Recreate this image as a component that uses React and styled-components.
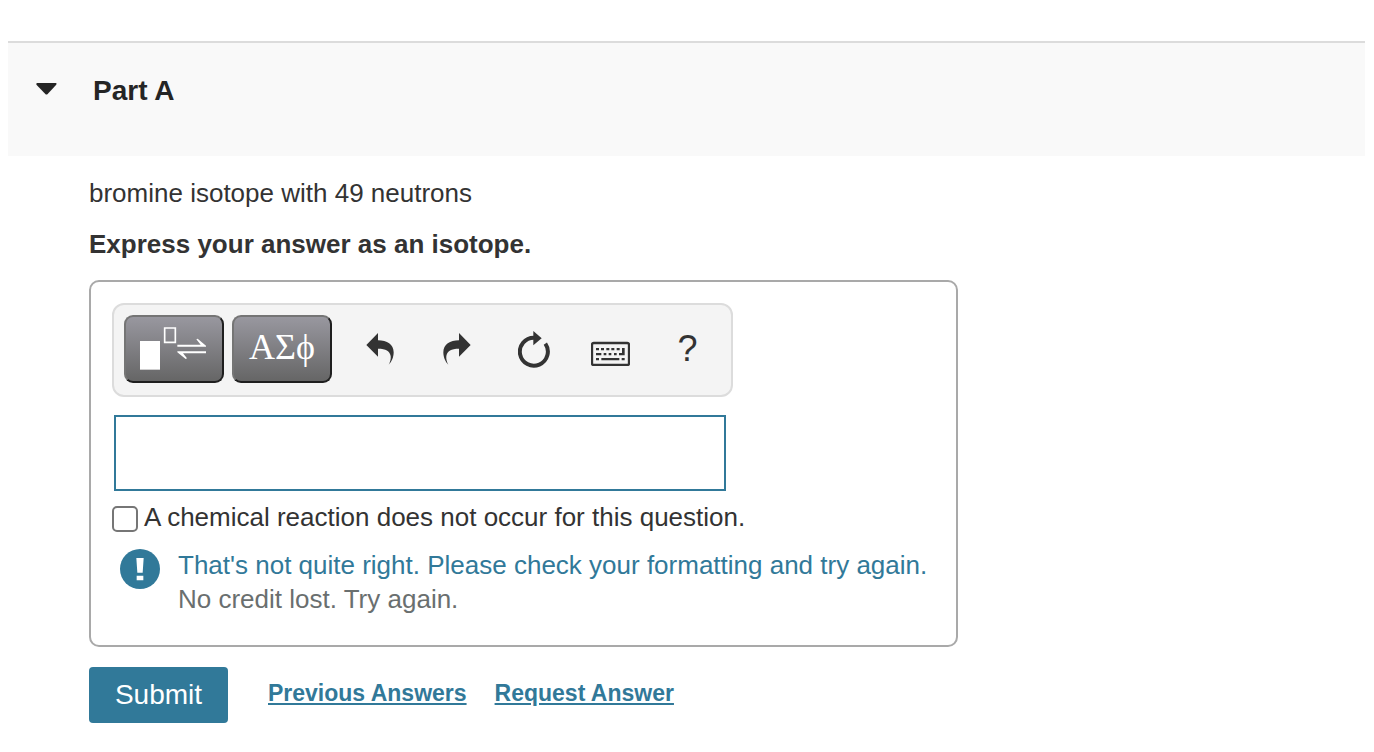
import { useState } from "react";
import styled, { createGlobalStyle } from "styled-components";

const GlobalStyle = createGlobalStyle`
    * {
        box-sizing: border-box;
    }
    body {
        margin: 0;
        background: #fff;
        color: #333;
        font-family: "Liberation Sans", Arial, Helvetica, sans-serif;
        font-size: 26px;
        line-height: 34px;
    }
    button, input {
        font-family: inherit;
    }
`
const Page = styled.main`
    padding: 41px 9px 20px 8px;
`
const PartHeader = styled.header`
    padding: 31px 28px 48px;
    border-top: 2px solid #dcdcdc;
    background: #f9f9f9;
`
const PartToggle = styled.button`
    display: flex;
    align-items: center;
    gap: 36px;
    padding: 0;
    border: none;
    background: none;
    color: #252525;
    font-size: 28px;
    font-weight: bold;
    line-height: 34px;
    cursor: pointer;
`
const Content = styled.section`
    max-width: 950px;
    padding: 20px 0 0 81px;
`
const Question = styled.p`
    margin: 0 0 17px;
`
const Instruction = styled.p`
    margin: 0 0 19px;
    font-weight: bold;
`
const AnswerBox = styled.div`
    padding: 21px 20px 29px 21px;
    border: 2px solid #a9a9a9;
    border-radius: 10px;
`
const Toolbar = styled.div`
    display: flex;
    align-items: center;
    gap: 8px;
    width: fit-content;
    padding: 10px 5px 12px 10px;
    border: 2px solid #dcdcdc;
    border-radius: 12px;
    background: #f4f4f4;
`
const PaletteButton = styled.button`
    display: flex;
    align-items: center;
    justify-content: center;
    width: 100px;
    height: 68px;
    padding: 0;
    border: 2px solid;
    border-color: #757575 #1f1f1f #1f1f1f #757575;
    border-radius: 9px;
    background: linear-gradient(#9a99a1, #646464) border-box;
    color: #fff;
    cursor: pointer;
`
const Greek = styled.span`
    padding-bottom: 4px;
    font-family: "Liberation Serif", "Times New Roman", serif;
    font-size: 36px;
    line-height: 36px;
`
const ToolGroup = styled.div`
    display: flex;
    margin-left: 1px;
`
const ToolButton = styled.button`
    display: flex;
    align-items: center;
    justify-content: center;
    width: 77px;
    height: 68px;
    padding: 0;
    border: none;
    background: none;
    color: #333;
    font-size: 36px;
    cursor: pointer;
`
const AnswerInput = styled.input`
    display: block;
    width: 612px;
    max-width: 100%;
    height: 76px;
    margin: 18px 0 9px 2px;
    padding: 0 16px;
    border: 2px solid #317999;
    border-radius: 0;
    outline: none;
    background: #fff;
    color: #333;
    font-size: 26px;
`
const CheckLabel = styled.label`
    display: flex;
    align-items: center;
    gap: 6px;
`
const Checkbox = styled.input`
    appearance: none;
    flex: none;
    width: 26px;
    height: 26px;
    margin: 4px 0 0;
    border: 2px solid #767676;
    border-radius: 5px;
    background: #fff;
    &:checked {
        background: #317999;
    }
`
const Feedback = styled.div`
    display: flex;
    align-items: flex-start;
    gap: 18px;
    margin-top: 14px;
    padding-left: 8px;
    svg {
        flex: none;
        margin-top: 1px;
    }
`
const FeedbackText = styled.p`
    margin: 0;
    color: ${props => props.$main ? "#317999" : "#6a6f6f"};
`
const Actions = styled.div`
    display: flex;
    align-items: center;
    gap: 40px;
    margin-top: 20px;
`
const SubmitButton = styled.button`
    width: 139px;
    height: 56px;
    padding: 0;
    border: none;
    border-radius: 4px;
    background: #317999;
    color: #fff;
    font-size: 28px;
    cursor: pointer;
`
const Links = styled.nav`
    display: flex;
    gap: 28px;
    padding-bottom: 4px;
`
const ActionLink = styled.a`
    color: #317999;
    font-size: 23px;
    font-weight: bold;
    text-decoration: underline;
`

const Caret = () => (
    <svg width="21" height="16" viewBox="0 0 63 48" fill="currentColor" aria-hidden="true">
        <path d="M4 0H59Q64 1 60 6L35 33Q31 36 28 33L2 6Q-1 1 4 0Z" />
    </svg>
)

const TemplateIcon = () => (
    <svg width="68" height="44" viewBox="0 0 204 132" fill="currentColor" aria-hidden="true">
        <path d="M0 42H60V128H0Z" />
        <path d="M74 3H106V46H74Z" fill="none" stroke="currentColor" strokeWidth="5" />
        <path d="M112 53H182L169 37L173 35L198 56V59H112Z" />
        <path d="M198 73V79H129L141 94L137 96L112 76V73Z" />
    </svg>
)

const CurvedArrow = ({ flip }) => (
    <svg width="28" height="32" viewBox="0 0 84 96" fill="currentColor" aria-hidden="true">
        <path
            transform={flip ? "translate(84 0) scale(-1 1)" : undefined}
            d="M1 36L36 0V22C63 22 83 34 83 58C83 74 76 88 68 95C73 86 75 78 74 69C71 54 60 47 36 47V71Z"
        />
    </svg>
)

const ResetIcon = () => (
    <svg width="32" height="37" viewBox="0 0 96 111" fill="none" aria-hidden="true">
        <path d="M82 38A42 42 0 1 1 48 20" stroke="currentColor" strokeWidth="12" />
        <path d="M46 0L71 22L46 43Z" fill="currentColor" />
    </svg>
)

const KeyboardIcon = () => (
    <svg width="39" height="34" viewBox="0 -30 117 102" fill="currentColor" aria-hidden="true">
        <rect x="3" y="3" width="111" height="66" rx="5" fill="none" stroke="currentColor" strokeWidth="7" />
        <path d="M15 18h9v7h-9zM30 18h9v7h-9zM46 18h9v7h-9zM61 18h9v7h-9zM77 18h9v7h-9z" />
        <path d="M15 33h16v7h-16zM38 33h8v7h-8zM53 33h8v7h-8zM69 33h8v7h-8zM84 33h9v-15h8v22h-17z" />
        <path d="M15 48h9v7h-9zM31 48h54v7h-54zM92 48h9v7h-9z" />
    </svg>
)

const AlertIcon = () => (
    <svg width="40" height="40" viewBox="0 0 120 120" aria-hidden="true">
        <circle cx="60" cy="60" r="60" fill="#317999" />
        <path d="M49 27H71L68 71H52ZM50 80H70V94H50Z" fill="#fff" />
    </svg>
)

function App() {
    const [open, setOpen] = useState(true);
    const [answer, setAnswer] = useState("");

    return (
        <>
            <GlobalStyle />
            <Page>
                <PartHeader>
                    <PartToggle type="button" aria-expanded={open} onClick={() => setOpen(!open)}>
                        <Caret />
                        Part A
                    </PartToggle>
                </PartHeader>
                {open && (
                    <Content>
                        <Question>bromine isotope with 49 neutrons</Question>
                        <Instruction>Express your answer as an isotope.</Instruction>
                        <AnswerBox>
                            <Toolbar role="toolbar" aria-label="Answer tools">
                                <PaletteButton type="button" aria-label="Templates"><TemplateIcon /></PaletteButton>
                                <PaletteButton type="button" aria-label="Greek letters"><Greek>ΑΣϕ</Greek></PaletteButton>
                                <ToolGroup>
                                    <ToolButton type="button" aria-label="Undo"><CurvedArrow /></ToolButton>
                                    <ToolButton type="button" aria-label="Redo"><CurvedArrow flip /></ToolButton>
                                    <ToolButton type="button" aria-label="Reset" onClick={() => setAnswer("")}><ResetIcon /></ToolButton>
                                    <ToolButton type="button" aria-label="Keyboard shortcuts"><KeyboardIcon /></ToolButton>
                                    <ToolButton type="button" aria-label="Help">?</ToolButton>
                                </ToolGroup>
                            </Toolbar>
                            <AnswerInput
                                type="text"
                                aria-label="Answer"
                                value={answer}
                                onChange={e => setAnswer(e.target.value)}
                            />
                            <CheckLabel htmlFor="no-reaction">
                                <Checkbox id="no-reaction" type="checkbox" />
                                A chemical reaction does not occur for this question.
                            </CheckLabel>
                            <Feedback role="status">
                                <AlertIcon />
                                <div>
                                    <FeedbackText $main>That's not quite right. Please check your formatting and try again.</FeedbackText>
                                    <FeedbackText>No credit lost. Try again.</FeedbackText>
                                </div>
                            </Feedback>
                        </AnswerBox>
                        <Actions>
                            <SubmitButton type="submit">Submit</SubmitButton>
                            <Links>
                                <ActionLink href="#previous">Previous Answers</ActionLink>
                                <ActionLink href="#request">Request Answer</ActionLink>
                            </Links>
                        </Actions>
                    </Content>
                )}
            </Page>
        </>
    );
}

export default App;
